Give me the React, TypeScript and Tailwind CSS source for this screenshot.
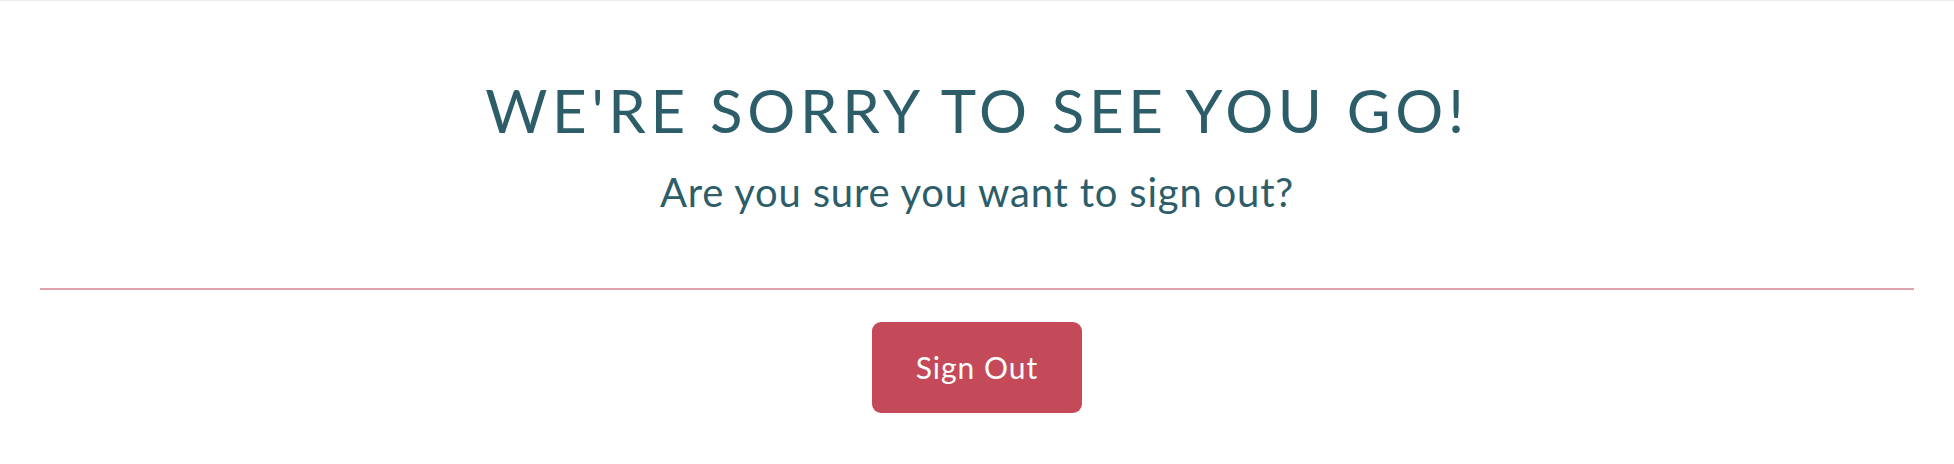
export default function App() {
  return (
    <div className="w-full h-[464px] bg-white border-t border-[#ececec]" style={{ fontFamily: "Lato, 'Open Sans', sans-serif" }}>
      <div className="px-10 flex flex-col items-center">
        <h1 className="mt-[73px] text-[60px] leading-[72px] tracking-[0.078em] text-[#2c5d69] font-normal text-center">
          WE'RE SORRY TO SEE YOU GO!
        </h1>
        <p className="mt-[22px] text-[40px] leading-[48px] tracking-[0.8px] text-[#2c5d69] text-center">
          Are you sure you want to sign out?
        </p>
        <div className="mt-[72px] w-full h-[2px] bg-[#e0a2aa]" />
        <button className="mt-[32px] w-[210px] h-[91px] rounded-[9px] bg-[#c44a5a] text-white text-[30px] tracking-[1px] flex items-center justify-center">
          Sign Out
        </button>
      </div>
    </div>
  );
}
